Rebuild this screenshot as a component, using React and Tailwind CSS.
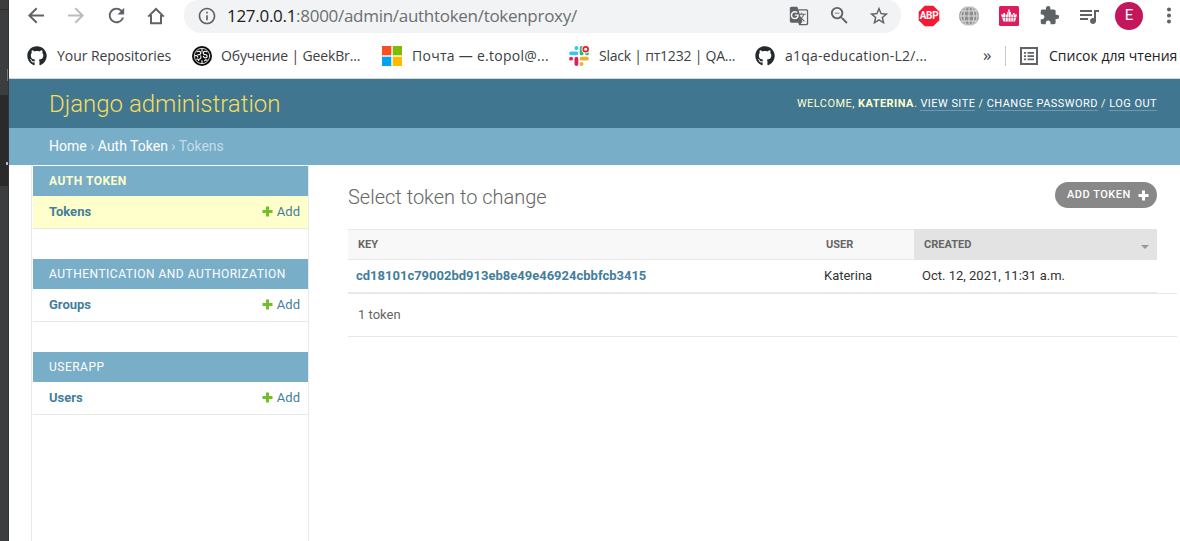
import React from 'react';
import { MdArrowBack, MdArrowForward, MdRefresh, MdInfoOutline, MdGTranslate, MdZoomOut, MdStarBorder, MdExtension, MdQueueMusic, MdMoreVert } from 'react-icons/md';
import { FaGithub } from 'react-icons/fa';

function Plus({ className }) {
  return (
    <svg viewBox="0 0 11 11" className={className}>
      <path d="M4 0.5h3V4h3.5v3H7v3.5H4V7H0.5V4H4z" fill="currentColor" />
    </svg>
  );
}

function Slot({ children, className = '' }) {
  return <div className={'flex h-6 w-6 shrink-0 items-center justify-center ' + (className || 'text-[#5f6368]')}>{children}</div>;
}

function Home() {
  return (
    <svg viewBox="0 0 18 18" className="h-[18px] w-[18px]">
      <path d="M1.200 9.600L9 2l7.800 7.600M4 8v8.200h10V8" fill="none" stroke="currentColor" strokeWidth="2" />
    </svg>
  );
}

function ReadingList() {
  return (
    <svg viewBox="0 0 18 18" className="h-[18px] w-[18px] shrink-0 text-[#5f6368]">
      <path d="M1 1h16v16H1z" fill="none" stroke="currentColor" strokeWidth="2" />
      <path d="M4 5h2v1.800H4zM4 8.200h2V10H4zM4 11.400h2v1.800H4zM7.500 5H14v1.800H7.500zM7.500 8.200H14V10H7.500zM7.500 11.400H14v1.800H7.500z" fill="currentColor" />
    </svg>
  );
}

function GeekBrains() {
  return (
    <svg viewBox="0 0 20 20" className="h-5 w-5 shrink-0">
      <circle cx="10" cy="10" r="10" fill="#0b0b0b" />
      <g fill="none" stroke="#fff" strokeWidth="1.100" strokeLinecap="round" strokeLinejoin="round">
        <circle cx="10" cy="10" r="7.700" strokeWidth="0.800" />
        <path d="M10 2.500v3.200M10 14.500v3" />
        <path d="M5 5.800c1.500-.9 3.800-.6 3.800 1.200S6.500 8.800 5.800 8.800M3.200 9.800c1.200-.6 2.400.2 2.600 1.400M8.800 9.800c.6 1.800-.2 3.200-1.600 3.400M4.800 13.200c.8-.4 1.600 0 2 1.400" />
        <path d="M15 5.800c-1.500-.9-3.800-.6-3.800 1.200s2.300 1.800 3 1.800c1.300.6 1.300 2.600-.2 3-1.300.3-2.400-.4-2.600-1.600M15.200 14.200c-1-.6-2-.4-2.600.6" />
      </g>
    </svg>
  );
}

function Microsoft() {
  return (
    <svg viewBox="0 0 20 20" className="h-5 w-5 shrink-0">
      <path fill="#f65022" d="M0 0h9.300v9.300H0z" />
      <path fill="#7fbb00" d="M10.700 0H20v9.300h-9.300z" />
      <path fill="#00a3f2" d="M0 10.700h9.300V20H0z" />
      <path fill="#ffba00" d="M10.700 10.700H20V20h-9.300z" />
    </svg>
  );
}

function Slack() {
  return (
    <svg viewBox="0 0 20 20" className="h-5 w-5 shrink-0">
      <g strokeWidth="3.800" strokeLinecap="round" fill="none">
        <path stroke="#36c5f0" d="M2 7.300h5.400M7.400 2v.2" />
        <path stroke="#2eb67d" d="M12.600 2v5.400M17.900 7.400h.1" />
        <path stroke="#e01e5a" d="M7.400 12.700v5.300M2 12.700h.1" />
        <path stroke="#ecb22e" d="M12.600 12.700h5.400M12.600 18v.1" />
      </g>
      <circle cx="16.700" cy="3.300" r="4.200" fill="#fff" />
      <circle cx="16.700" cy="3.300" r="2.400" fill="#fff" stroke="#ec1c24" strokeWidth="1.700" />
    </svg>
  );
}

function Abp() {
  return (
    <div className="relative h-[22px] w-[22px]">
      <svg viewBox="0 0 22 22" className="h-[22px] w-[22px]">
        <path d="M6.700 0.700h8.600l6 6v8.600l-6 6H6.700l-6-6V6.700z" fill="#f61936" />
      </svg>
      <span className="absolute inset-0 flex items-center justify-center font-['Roboto',sans-serif] text-[10px] leading-[22px] font-bold tracking-[-0.3px] text-white">ABP</span>
    </div>
  );
}

function Globe() {
  return (
    <svg viewBox="0 0 20 20" className="h-5 w-5">
      <circle cx="10" cy="10" r="10" fill="#8f8f8f" />
      <g fill="none" stroke="#e6e6e6" strokeWidth="0.900">
        <path d="M10 0v20M0 10h20M2 5h16M2 15h16" />
        <ellipse cx="10" cy="10" rx="5" ry="9.800" />
        <ellipse cx="10" cy="10" rx="8.200" ry="9.800" />
      </g>
    </svg>
  );
}

function Ship() {
  return (
    <svg viewBox="0 0 20 20" className="h-5 w-5">
      <rect width="20" height="20" rx="1.500" fill="#df1b59" />
      <path d="M2 8.500h2.500V7H6v1.500h2V6h1.200V3.500h1.600V6H12v2.500h2V7h1.500v1.500H18L16 15.500H4.500z" fill="#fff" />
      <path d="M3 11.600h14M6.500 8.500v7M9.200 6v9.500M11.900 8.500v7M14.400 8.500v7" stroke="#df1b59" strokeWidth="0.600" />
    </svg>
  );
}

function Bookmark({ icon, label, className, textClass }) {
  return (
    <div className={'flex shrink-0 items-center ' + className}>
      {icon}
      <span className={'whitespace-nowrap ' + textClass}>{label}</span>
    </div>
  );
}

function Module({ title, item, active }) {
  return (
    <section className="mb-[30px] shrink-0">
      <h2 className={'flex h-[30px] items-center bg-[#79aec8] pl-4 text-[12px] tracking-[0.5px] uppercase ' + (active ? 'font-bold text-[#ffffcc]' : 'font-normal text-white')}>{title}</h2>
      <div className={'flex h-[33px] items-center border-b border-[#e8e8e8] pr-2 pl-4 text-[13px] text-[#447e9b] ' + (active ? 'bg-[#ffffcc]' : 'bg-white')}>
        <span className="grow font-bold">{item}</span>
        <Plus className="mr-1 mb-[2px] h-[11px] w-[11px] text-[#70bf2b]" />
        <span>Add</span>
      </div>
    </section>
  );
}

export default function App() {
  return (
    <div className="flex h-[541px] w-[1180px] overflow-hidden bg-white font-['Roboto',sans-serif] text-[13px] text-[#333]">
      <aside className="flex w-[9px] shrink-0 flex-col border-r border-[#333335] bg-[#3c3d3f]">
        <div className="h-[10px] border-b border-[#2f2f30]" />
        <div className="flex h-[85px] items-end justify-end pb-[14px]">
          <div className="h-3 w-px bg-[#77787a]" />
        </div>
        <div className="flex h-[91px] items-center justify-end bg-[#2a2a2a] pt-[45px]">
          <div className="h-[3px] w-[2px] bg-[#bbb]" />
        </div>
      </aside>
      <div className="flex min-w-0 grow flex-col">
        <div className="flex h-[33px] shrink-0 items-start font-['Open_Sans',sans-serif]">
          <div className="flex h-[31px] shrink-0 items-center gap-4 pl-[15px]">
            <Slot><MdArrowBack size={25} /></Slot>
            <Slot className="text-[#babcbe]"><MdArrowForward size={25} /></Slot>
            <Slot className="pl-px text-[#5f6368]"><MdRefresh size={25} /></Slot>
            <Slot className="text-[#5f6368]"><Home /></Slot>
          </div>
          <div className="ml-[16px] flex h-[33px] w-[717px] shrink-0 items-center rounded-b-[17px] rounded-t-[14px] bg-[#f1f3f4] pb-[2px] pl-[11px]">
            <Slot><MdInfoOutline size={20} /></Slot>
            <span className="ml-2 grow text-[17px] tracking-[-0.290px] whitespace-nowrap text-[#6b6f73]"><span className="text-[#202124]">127.0.0.1</span>:8000/admin/authtoken/tokenproxy/</span>
            <Slot><MdGTranslate size={20} /></Slot>
            <Slot className="ml-4 text-[#5f6368]"><MdZoomOut size={23} /></Slot>
            <Slot className="mr-[10px] ml-4 text-[#5f6368]"><MdStarBorder size={22} /></Slot>
          </div>
          <div className="flex h-[31px] shrink-0 items-center gap-4 pl-4">
            <Slot><Abp /></Slot>
            <Slot><Globe /></Slot>
            <Slot><Ship /></Slot>
            <Slot><MdExtension size={21} /></Slot>
            <Slot><MdQueueMusic size={26} /></Slot>
            <div className="-ml-[2px] flex h-7 w-7 shrink-0 items-center justify-center rounded-full bg-[#c2185b] font-['Roboto',sans-serif] text-[15px] text-white">E</div>
            <Slot className="-ml-[2px] text-[#5f6368]"><MdMoreVert size={25} /></Slot>
          </div>
        </div>
        <div className="flex h-[46px] shrink-0 items-center border-b border-[#d5d7da] pl-[18px] font-['Open_Sans',sans-serif] text-[14px] text-[#3c4043]">
          <Bookmark className="w-[165px] gap-[10px]" icon={<FaGithub size={20} color="#24292e" />} label="Your Repositories" textClass="tracking-[-0.050px]" />
          <Bookmark className="w-[190px] gap-[9px]" icon={<GeekBrains />} label="Обучение | GeekBr..." textClass="tracking-[-0.150px]" />
          <Bookmark className="w-[187px] gap-[10px]" icon={<Microsoft />} label="Почта — e.topol@..." textClass="tracking-[0.270px]" />
          <Bookmark className="w-[186px] gap-[10px]" icon={<Slack />} label="Slack | пт1232 | QA..." textClass="tracking-[-0.220px]" />
          <Bookmark className="w-[228px] gap-[10px]" icon={<FaGithub size={20} color="#24292e" />} label="a1qa-education-L2/..." textClass="tracking-[0.220px]" />
          <span className="w-4 shrink-0 pb-[2px] text-[17px] text-[#3c4043]">»</span>
          <div className="ml-[6px] h-5 w-px shrink-0 bg-[#c8cacd]" />
          <Bookmark className="ml-[14px] gap-[11px]" icon={<ReadingList />} label="Список для чтения" textClass="text-[#202124]" />
        </div>
        <header className="flex h-[49px] shrink-0 items-center justify-between bg-[#417690] pr-[23px] pl-10">
          <h1 className="text-[24px] font-light text-[#f5dd5d]">Django administration</h1>
          <div className="pt-[2px] text-[11px] tracking-[0.450px] whitespace-nowrap text-[#ffffcc] uppercase">
            Welcome, <strong className="font-bold">Katerina</strong>. <a className="border-b border-white/25 text-white">View site</a> / <a className="border-b border-white/25 text-white">Change password</a> / <a className="border-b border-white/25 text-white">Log out</a>
          </div>
        </header>
        <nav className="flex h-[37px] shrink-0 items-center bg-[#79aec8] pl-10 text-[14px] whitespace-pre text-[#c4dce8]">
          <span className="text-white">Home</span> › <span className="text-white">Auth Token</span> › Tokens
        </nav>
        <div className="flex min-h-0 grow">
          <div className="ml-[22px] flex w-[278px] shrink-0 flex-col border-x border-[#eaeaea] pt-px pl-px">
            <Module title="Auth Token" item="Tokens" active />
            <Module title="Authentication and Authorization" item="Groups" />
            <Module title="Userapp" item="Users" />
          </div>
          <main className="flex grow flex-col pl-[39px]">
            <div className="flex h-[64px] shrink-0 items-start justify-between pt-[17px] pr-[23px]">
              <h1 className="text-[20px] leading-[30px] font-light text-[#666]">Select token to change</h1>
              <a className="flex h-[26px] w-[102px] items-center justify-between rounded-full bg-[#888] pr-2 pl-3 text-[11px] tracking-[0.5px] text-white uppercase">
                <span className="pt-px font-medium">Add token</span>
                <Plus className="h-[11px] w-[11px]" />
              </a>
            </div>
            <div className="mr-[23px] flex h-[31px] shrink-0 border-y border-[#e8e8e8] bg-[#f8f8f8] text-[11px] font-bold text-[#666]">
              <div className="flex w-[468px] items-center pt-[2px] pl-[10px]">KEY</div>
              <div className="flex w-[98px] items-center pt-[2px] pl-[10px]">USER</div>
              <div className="-my-px flex grow items-center justify-between bg-[#e3e3e3] pt-[2px] pr-2 pl-[10px]">
                CREATED
                <svg viewBox="0 0 8 4" className="mt-[3px] h-1 w-2"><path d="M0 0h8L4 4z" fill="#999" /></svg>
              </div>
            </div>
            <div className="mr-[23px] flex h-[33px] shrink-0 items-center border-b border-[#e8e8e8]">
              <div className="w-[468px] pl-2 font-bold text-[#447e9b]">cd18101c79002bd913eb8e49e46924cbbfcb3415</div>
              <div className="w-[98px] pl-2">Katerina</div>
              <div className="pl-2">Oct. 12, 2021, 11:31 a.m.</div>
            </div>
            <div className="mr-[3px] flex h-[44px] shrink-0 items-center border-y border-[#e8e8e8] pl-[10px] text-[#666]">1 token</div>
          </main>
        </div>
      </div>
    </div>
  );
}
